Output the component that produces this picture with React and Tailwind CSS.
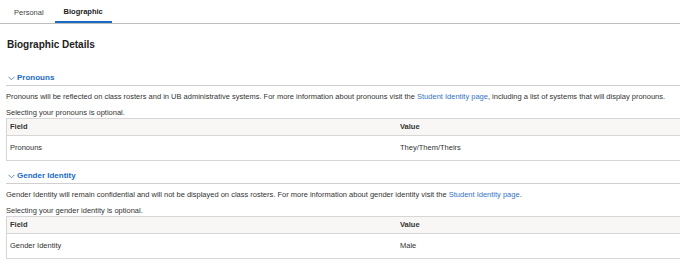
import React from "react";

function Chevron() {
  return (
    <svg width="7" height="5" viewBox="0 0 7 5" className="mr-[2px] mt-[1px]">
      <polyline points="0.5,0.8 3.5,3.8 6.5,0.8" fill="none" stroke="#5a7fa8" strokeWidth="0.9" />
    </svg>
  );
}

function Section({ title, children, optional, field, value }) {
  return (
    <div>
      <div className="flex items-center h-[15px] pl-[2px] border-b border-[#cfcfcf] text-[8px] font-bold text-[#1a6bc4]">
        <Chevron />
        <span>{title}</span>
      </div>
      <div className="mt-[6px] h-[10px] leading-[10px] text-[7.5px] text-[#333]">{children}</div>
      <div className="mt-[6px] h-[10px] leading-[10px] text-[7.5px] text-[#333]">{optional}</div>
      <div className="border-l border-t border-b border-[#d6d6d6]">
        <div className="flex items-center h-[17px] bg-[#f8f7f5] border-b border-[#d6d6d6] text-[7.5px] font-bold text-[#333]">
          <div className="w-[393px] pl-[3px]">Field</div>
          <div>Value</div>
        </div>
        <div className="flex items-center h-[24px] text-[7.5px] text-[#333]">
          <div className="w-[393px] pl-[3px]">{field}</div>
          <div>{value}</div>
        </div>
      </div>
    </div>
  );
}

export default function App() {
  return (
    <div
      className="w-[680px] h-[268px] overflow-hidden bg-white"
      style={{ fontFamily: '"Liberation Sans", Arial, sans-serif' }}
    >
      <div className="flex h-[24px] border-b border-[#bdbdbd]">
        <div className="ml-[5px] px-[9px] h-[23px] flex items-center pt-[2px] text-[7.5px] text-[#444]">Personal</div>
        <div className="ml-[2px] px-[9px] h-[23px] flex items-center pt-[2px] text-[7.5px] font-bold text-[#222] border-b-2 border-[#1a6bc4]">
          Biographic
        </div>
      </div>
      <div className="pl-[7px] mt-[15px] h-[12px] leading-[12px] text-[10px] font-bold text-[#222]">Biographic Details</div>
      <div className="pl-[6px] mt-[20px]">
        <Section
          title="Pronouns"
          optional="Selecting your pronouns is optional."
          field="Pronouns"
          value="They/Them/Theirs"
        >
          Pronouns will be reflected on class rosters and in UB administrative systems. For more information about pronouns visit the{" "}
          <span className="text-[#3574c4]">Student Identity page</span>, including a list of systems that will display pronouns.
        </Section>
        <div className="mt-[8px]">
          <Section
            title="Gender Identity"
            optional="Selecting your gender identity is optional."
            field="Gender Identity"
            value="Male"
          >
            Gender Identity will remain confidential and will not be displayed on class rosters. For more information about gender identity visit the{" "}
            <span className="text-[#3574c4]">Student Identity page</span>.
          </Section>
        </div>
      </div>
    </div>
  );
}
